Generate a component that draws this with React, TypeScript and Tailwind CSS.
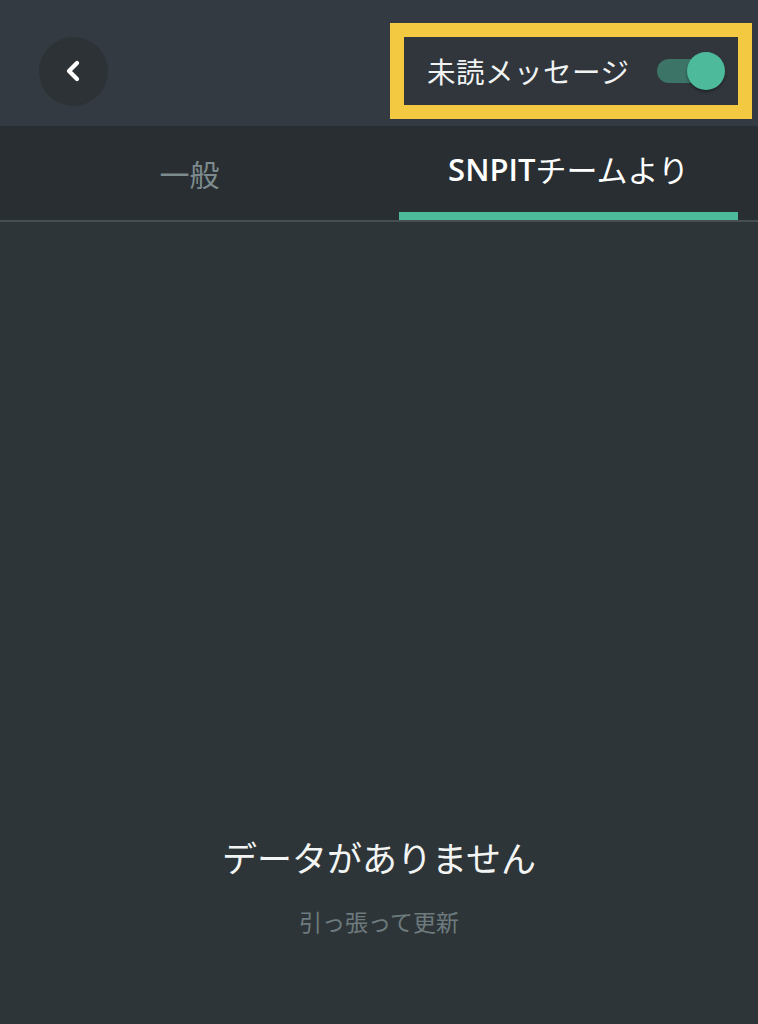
import { ChevronLeft } from "lucide-react";

const jp = { fontFamily: '"Noto Sans CJK JP", "Noto Sans", sans-serif' };

export default function App() {
  return (
    <div className="w-[758px] h-[1024px] flex flex-col bg-[#2e3538] text-white" style={jp}>
      <header className="h-[126px] bg-[#343a41] flex items-center justify-between pt-[16px] pl-[39px] pr-[6px]">
        <button className="w-[69px] h-[69px] rounded-full bg-[#2c3235] flex items-center justify-center">
          <ChevronLeft size={32} strokeWidth={3.2} className="text-white -ml-[2px]" />
        </button>
        <div className="w-[362px] h-[96px] border-[14px] border-[#f4c942] bg-[#30363c] flex items-center pl-[23px] pr-[13px] justify-between">
          <span className="text-[28.5px] tracking-[0.5px] text-[#f1f3f3]">未読メッセージ</span>
          <div className="relative w-[70px] h-[40px] flex items-center">
            <div className="ml-[2px] w-[60px] h-[24px] rounded-full bg-[#3c7467]" />
            <div className="absolute right-0 top-[1px] w-[38px] h-[38px] rounded-full bg-[#4dbb9b] shadow-[0_2px_3px_rgba(0,0,0,0.35)]" />
          </div>
        </div>
      </header>
      <nav className="h-[96px] bg-[#282e31] grid grid-cols-2 border-b-[2px] border-[#474e53]">
        <div className="flex items-center justify-center text-[30px] text-[#7d8b8e]">一般</div>
        <div className="flex flex-col px-[20px]">
          <div className="flex-1 flex items-center justify-center text-[31px] text-white">
            <span className="font-semibold" style={{ fontFamily: '"Open Sans", "Noto Sans", sans-serif' }}>SNPIT</span>
            <span>チームより</span>
          </div>
          <div className="h-[8px] bg-[#4dbb9b]" />
        </div>
      </nav>
      <main className="flex-1 flex flex-col items-center pt-[617px]">
        <div className="text-[35px] text-[#f3f5f5] leading-none">データがありません</div>
        <div className="mt-[36px] text-[23px] text-[#6d7b7e] leading-none">引っ張って更新</div>
      </main>
    </div>
  );
}
